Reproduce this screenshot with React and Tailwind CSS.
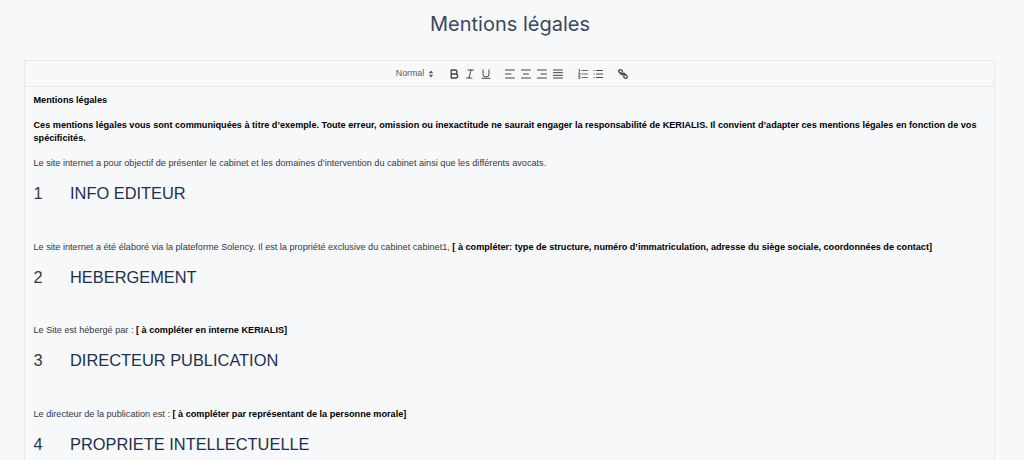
const sans = "font-['Liberation_Sans',Arial,sans-serif]";

function Bold({ children }) {
  return <strong className="font-bold text-black">{children}</strong>;
}

function Heading({ n, children }) {
  return (
    <h2 className="mt-[13px] flex text-[16.4px] leading-[20px] text-[#1b3050]">
      <span className="w-[36.5px] text-[#33383f]">{n}</span>
      <span>{children}</span>
    </h2>
  );
}

function Para({ children, className }) {
  return <p className={`text-[9.13px] leading-[13px] text-[#33383f] ${className}`}>{children}</p>;
}

function Toolbar() {
  const s = { fill: "none", stroke: "#444", strokeWidth: 1, strokeLinecap: "round", strokeLinejoin: "round" };
  const Align = ({ rows }) => (
    <svg width="10" height="10" viewBox="0 0 10 10" {...s}>
      {rows.map(([a, b], i) => <path key={i} d={`M${a} ${1 + i * (8 / (rows.length - 1))}H${b}`} />)}
    </svg>
  );
  return (
    <div className="flex h-[26px] items-center justify-center border-b border-[#e6e8ea] pl-[5px]">
      <div className="flex items-center gap-[4px] text-[8.8px] text-[#555a60]">
        <span>Normal</span>
        <svg width="6" height="8" viewBox="0 0 6 8" fill="#555">
          <path d="M3 0.5 5.2 3.2H.8ZM3 7.5 .8 4.8H5.2Z" />
        </svg>
      </div>
      <div className="ml-[15px] flex items-center gap-[6px]">
        <svg width="10" height="10" viewBox="0 0 10 10" {...s} strokeWidth="1.3">
          <path d="M2.2 1H6a2 2 0 0 1 0 4H2.2ZM2.2 5H6.6a2 2 0 0 1 0 4H2.2Z" />
        </svg>
        <svg width="10" height="10" viewBox="0 0 10 10" {...s}>
          <path d="M3 1H8.5M1.5 9H7M6 1 4 9" />
        </svg>
        <svg width="10" height="10" viewBox="0 0 10 10" {...s}>
          <path d="M2 1V5a3 3 0 0 0 6 0V1M1 9.3H9" />
        </svg>
      </div>
      <div className="ml-[14px] flex items-center gap-[6px]">
        <Align rows={[[0.5, 9.5], [0.5, 6], [0.5, 9.5]]} />
        <Align rows={[[0.5, 9.5], [2.5, 7.5], [0.5, 9.5]]} />
        <Align rows={[[0.5, 9.5], [4, 9.5], [0.5, 9.5]]} />
        <Align rows={[[0.5, 9.5], [0.5, 9.5], [0.5, 9.5], [0.5, 9.5]]} />
      </div>
      <div className="ml-[15px] flex items-center gap-[5px]">
        <svg width="10" height="10" viewBox="0 0 10 10" {...s}>
          <path d="M4 1.5H9.5M4 5H9.5M4 8.5H9.5M.8 .8 1.6 .5V3M.6 4H2.2L.6 6H2.2M.6 7.3H2.2L1.2 8.2 2.2 9.3H.6" strokeWidth=".8" />
        </svg>
        <svg width="10" height="10" viewBox="0 0 10 10" {...s}>
          <path d="M3.5 1.5H9.5M3.5 5H9.5M3.5 8.5H9.5M1 1.5H1.2M1 5H1.2M1 8.5H1.2" />
        </svg>
      </div>
      <svg className="ml-[15px]" width="10" height="10" viewBox="0 0 10 10" {...s} strokeWidth="1.3">
        <path d="M4.5 2.2 3.4 1.1a1.5 1.5 0 0 0-2.2 2.2l2 2a1.5 1.5 0 0 0 2.1 0M5.5 7.8l1.1 1.1a1.5 1.5 0 0 0 2.2-2.2l-2-2a1.5 1.5 0 0 0-2.1 0M3.4 3.4 6.6 6.6" />
      </svg>
    </div>
  );
}

export default function App() {
  return (
    <div className={`h-[460px] w-[1024px] overflow-hidden bg-[#f7f8fa] ${sans}`}>
      <h1 className="pt-[12px] pr-[4px] text-center font-['Inter',sans-serif] text-[20px] leading-[24px] font-normal text-[#3a4760]">
        Mentions légales
      </h1>
      <div className="mx-[24px] mt-[24px] h-[420px] w-[971px] border border-[#e6e8ea]">
        <Toolbar />
        <div className="pt-[7px] pr-[9px] pl-[8.5px]">
          <Para>
            <Bold>Mentions légales</Bold>
          </Para>
          <Para className="mt-[12px]">
            <Bold>
              Ces mentions légales vous sont communiquées à titre d’exemple. Toute erreur, omission ou inexactitude ne
              saurait engager la responsabilité de KERIALIS. Il convient d’adapter ces mentions légales en fonction de vos
              spécificités.
            </Bold>
          </Para>
          <Para className="mt-[12px]">
            Le site internet a pour objectif de présenter le cabinet et les domaines d’intervention du cabinet ainsi que
            les différents avocats.
          </Para>
          <Heading n="1">INFO EDITEUR</Heading>
          <Para className="mt-[37.7px]">
            Le site internet a été élaboré via la plateforme Solency. Il est la propriété exclusive du cabinet cabinet1,{" "}
            <Bold>
              [ à compléter: type de structure, numéro d’immatriculation, adresse du siège sociale, coordonnées de contact]
            </Bold>
          </Para>
          <Heading n="2">HEBERGEMENT</Heading>
          <Para className="mt-[37.7px]">
            Le Site est hébergé par : <Bold>[ à compléter en interne KERIALIS]</Bold>
          </Para>
          <Heading n="3">DIRECTEUR PUBLICATION</Heading>
          <Para className="mt-[37.7px]">
            Le directeur de la publication est : <Bold>[ à compléter par représentant de la personne morale]</Bold>
          </Para>
          <Heading n="4">PROPRIETE INTELLECTUELLE</Heading>
        </div>
      </div>
    </div>
  );
}
